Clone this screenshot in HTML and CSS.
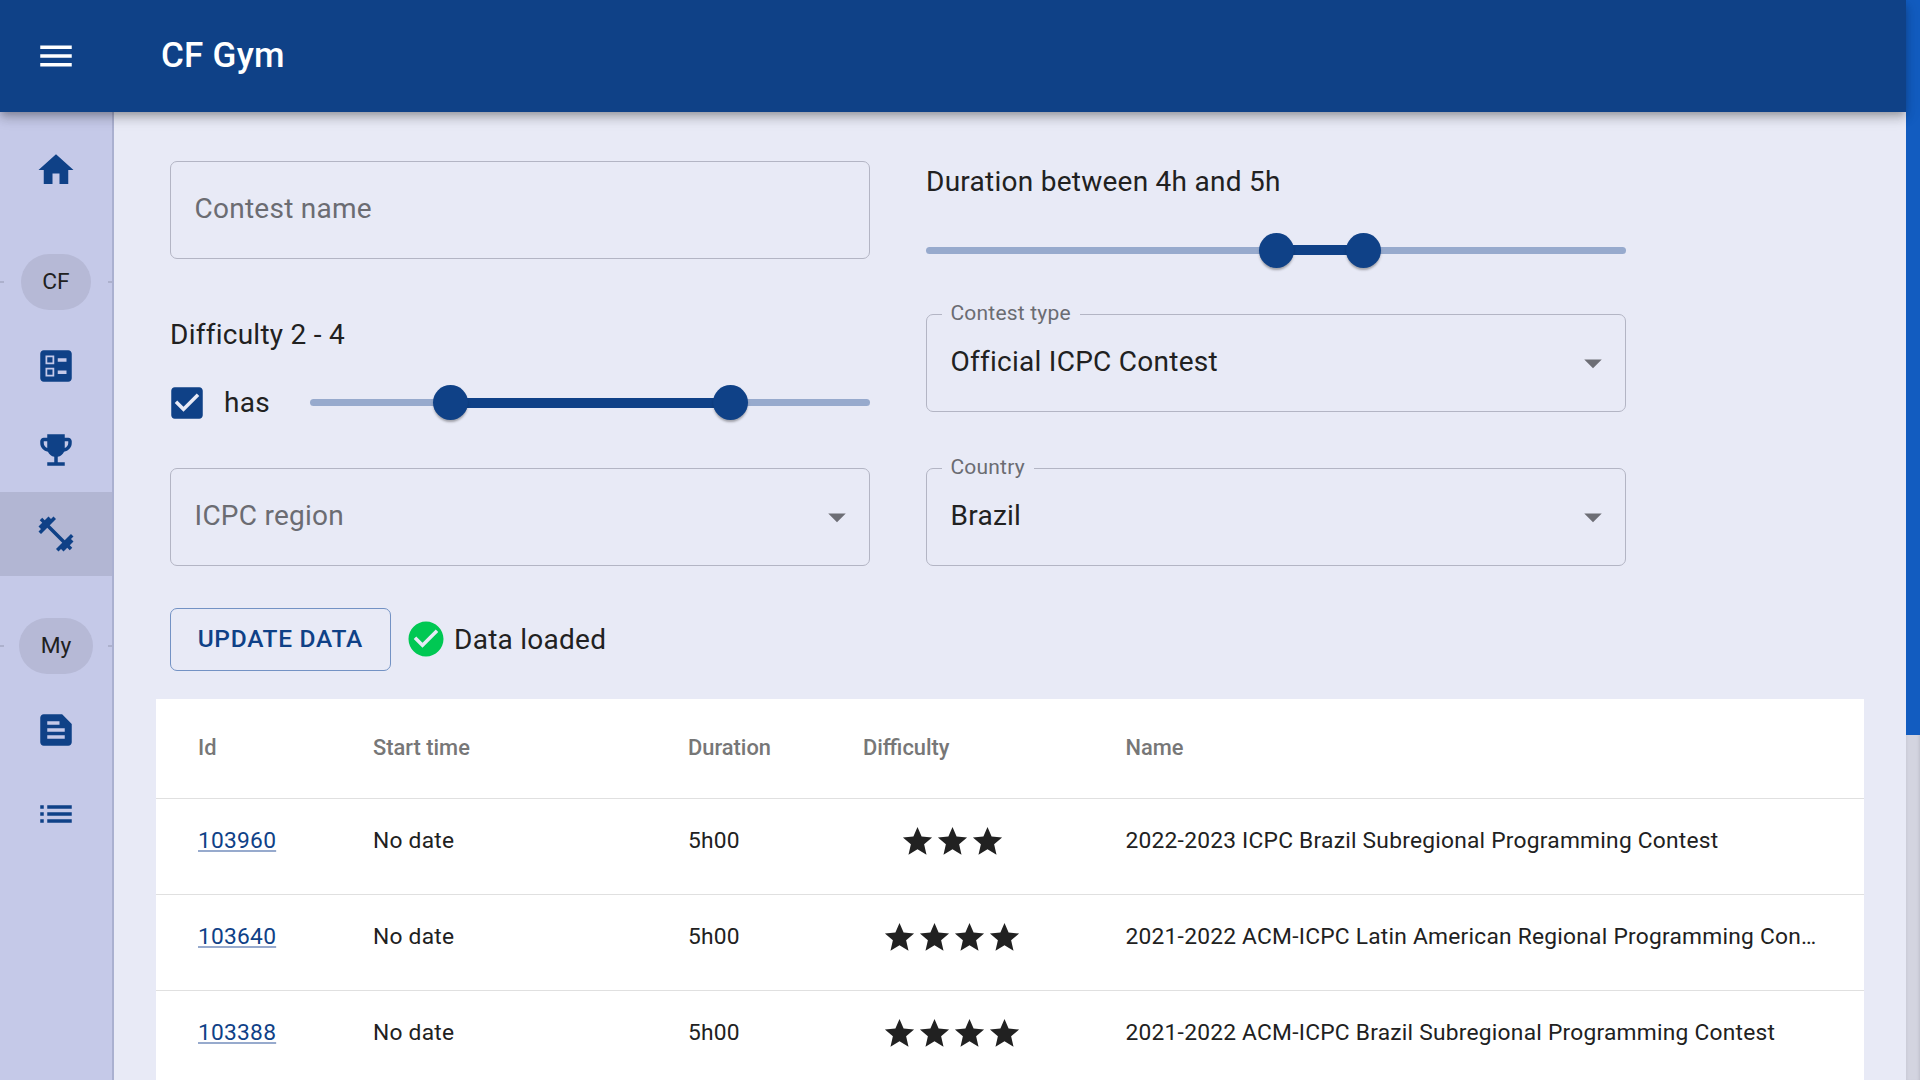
FILE: index.html
```html
<!DOCTYPE html>
<html lang="en">
<head>
<meta charset="utf-8">
<title>CF Gym</title>
<link rel="stylesheet" href="styles.css">
</head>
<body>
<div class="app">
  <div class="page">
    <header class="appbar">
      <svg class="icon menu-icon" viewBox="0 0 24 24"><path d="M3 18h18v-2H3v2zm0-5h18v-2H3v2zm0-7v2h18V6H3z"/></svg>
      <h1 class="app-title">CF Gym</h1>
    </header>
    <div class="body">
      <nav class="sidebar">
        <a class="nav-item"><svg class="icon" viewBox="0 0 24 24"><path d="M10 20v-6h4v6h5v-8h3L12 3 2 12h3v8z"/></svg></a>
        <div class="nav-divider"><span class="chip chip-cf">CF</span></div>
        <a class="nav-item"><svg class="icon" viewBox="0 0 24 24"><path fill-rule="evenodd" d="M13 9.5h5v-2h-5v2zm0 7h5v-2h-5v2zm6 4.5H5c-1.1 0-2-.9-2-2V5c0-1.1.9-2 2-2h14c1.1 0 2 .9 2 2v14c0 1.1-.9 2-2 2zM6 11h5V6H6v5zm1-4h3v3H7V7zM6 18h5v-5H6v5zm1-4h3v3H7v-3z"/></svg></a>
        <a class="nav-item"><svg class="icon" viewBox="0 0 24 24"><path d="M19 5h-2V3H7v2H5c-1.1 0-2 .9-2 2v1c0 2.55 1.92 4.63 4.39 4.94.63 1.5 1.98 2.63 3.61 2.96V19H7v2h10v-2h-4v-3.1c1.63-.33 2.98-1.46 3.61-2.96C19.08 12.63 21 10.55 21 8V7c0-1.1-.9-2-2-2zM5 8V7h2v3.82C5.84 10.4 5 9.3 5 8zm14 0c0 1.3-.84 2.4-2 2.82V7h2v1z"/></svg></a>
        <a class="nav-item selected"><svg class="icon" viewBox="0 0 24 24"><path d="M20.57 14.86 22 13.43 20.57 12 17 15.57 8.43 7 12 3.43 10.57 2 9.14 3.43 7.71 2 5.57 4.14 4.14 2.71 2.71 4.14l1.43 1.43L2 7.71l1.43 1.43L2 10.57 3.43 12 7 8.43 15.57 17 12 20.57 13.43 22l1.43-1.43L16.29 22l2.14-2.14 1.43 1.43 1.43-1.43-1.43-1.43L22 16.29z"/></svg></a>
        <div class="nav-divider"><span class="chip chip-my">My</span></div>
        <a class="nav-item"><svg class="icon" viewBox="0 0 24 24"><path d="M15.5 3H5c-1.1 0-2 .9-2 2v14c0 1.1.9 2 2 2h14c1.1 0 2-.9 2-2V8.5L15.5 3zM7 7h7v2H7V7zm10 10H7v-2h10v2zm0-4H7v-2h10v2z"/></svg></a>
        <a class="nav-item"><svg class="icon" viewBox="0 0 24 24"><path d="M3 13h2v-2H3v2zm0 4h2v-2H3v2zm0-8h2V7H3v2zm4 4h14v-2H7v2zm0 4h14v-2H7v2zM7 7v2h14V7H7z"/></svg></a>
      </nav>
      <main class="main">
        <section class="filters">
          <div class="filter-col">
            <div class="field"><span class="field-text placeholder">Contest name</span></div>
            <div class="filter-block">
              <div class="filter-label diff-label">Difficulty 2 - 4</div>
              <div class="has-row">
                <svg class="icon check-icon" viewBox="0 0 24 24"><path d="M19 3H5c-1.11 0-2 .9-2 2v14c0 1.1.89 2 2 2h14c1.11 0 2-.9 2-2V5c0-1.1-.89-2-2-2zm-9 14l-5-5 1.41-1.41L10 14.17l7.59-7.59L19 8l-9 9z"/></svg>
                <span class="has-text">has</span>
                <div class="slider has-slider">
                  <div class="rail"></div>
                  <div class="track" style="left:25%;width:50%"></div>
                  <div class="thumb" style="left:25%"></div>
                  <div class="thumb" style="left:75%"></div>
                </div>
              </div>
            </div>
            <div class="field">
              <span class="field-text placeholder">ICPC region</span>
              <svg class="caret" viewBox="0 0 24 24"><path d="M7 10l5 5 5-5z"/></svg>
            </div>
          </div>
          <div class="filter-col dur-col">
            <div class="filter-block dur-block">
              <div class="filter-label dur-label">Duration between 4h and 5h</div>
              <div class="slider dur-slider">
                <div class="rail"></div>
                <div class="track" style="left:50%;width:12.5%"></div>
                <div class="thumb" style="left:50%"></div>
                <div class="thumb" style="left:62.5%"></div>
              </div>
            </div>
            <div class="field">
              <span class="field-label">Contest type</span>
              <span class="field-text">Official ICPC Contest</span>
              <svg class="caret" viewBox="0 0 24 24"><path d="M7 10l5 5 5-5z"/></svg>
            </div>
            <div class="field">
              <span class="field-label">Country</span>
              <span class="field-text">Brazil</span>
              <svg class="caret" viewBox="0 0 24 24"><path d="M7 10l5 5 5-5z"/></svg>
            </div>
          </div>
        </section>
        <div class="actions">
          <button class="update-btn">UPDATE DATA</button>
          <svg class="icon ok-icon" viewBox="0 0 24 24"><path d="M12 2C6.48 2 2 6.48 2 12s4.48 10 10 10 10-4.48 10-10S17.52 2 12 2zm-2 15-5-5 1.41-1.41L10 14.17l7.59-7.59L19 8l-9 9z"/></svg>
          <span class="ok-text">Data loaded</span>
        </div>
        <table class="contests">
          <colgroup>
            <col class="c-id"><col class="c-start"><col class="c-dur"><col class="c-diff"><col class="c-name">
          </colgroup>
          <thead>
            <tr><th>Id</th><th>Start time</th><th>Duration</th><th>Difficulty</th><th>Name</th></tr>
          </thead>
          <tbody>
            <tr>
              <td><a class="link">103960</a></td><td>No date</td><td>5h00</td>
              <td><div class="stars"><svg viewBox="0 0 24 24"><use href="#star"/></svg><svg viewBox="0 0 24 24"><use href="#star"/></svg><svg viewBox="0 0 24 24"><use href="#star"/></svg></div></td>
              <td class="name-cell">2022-2023 ICPC Brazil Subregional Programming Contest</td>
            </tr>
            <tr>
              <td><a class="link">103640</a></td><td>No date</td><td>5h00</td>
              <td><div class="stars"><svg viewBox="0 0 24 24"><use href="#star"/></svg><svg viewBox="0 0 24 24"><use href="#star"/></svg><svg viewBox="0 0 24 24"><use href="#star"/></svg><svg viewBox="0 0 24 24"><use href="#star"/></svg></div></td>
              <td class="name-cell">2021-2022 ACM-ICPC Latin American Regional Programming Contest</td>
            </tr>
            <tr>
              <td><a class="link">103388</a></td><td>No date</td><td>5h00</td>
              <td><div class="stars"><svg viewBox="0 0 24 24"><use href="#star"/></svg><svg viewBox="0 0 24 24"><use href="#star"/></svg><svg viewBox="0 0 24 24"><use href="#star"/></svg><svg viewBox="0 0 24 24"><use href="#star"/></svg></div></td>
              <td class="name-cell">2021-2022 ACM-ICPC Brazil Subregional Programming Contest</td>
            </tr>
          </tbody>
        </table>
      </main>
    </div>
  </div>
  <div class="scrollbar"><div class="scroll-thumb"></div></div>
</div>
<svg class="defs" aria-hidden="true"><defs><path id="star" d="M12 17.27 18.18 21l-1.64-7.03L22 9.24l-7.19-.61L12 2 9.19 8.63 2 9.24l5.46 4.73L5.82 21z"/></defs></svg>
</body>
</html>
```
FILE: styles.css
```css
* { box-sizing: border-box; }
html, body { margin: 0; height: 100%; overflow: hidden; }
body { font-family: Roboto, "Liberation Sans", sans-serif; color: #212121; background: #e8eaf6; }
.defs { display: none; }

.app { display: flex; height: 1080px; overflow: hidden; }
.page { flex: 1; min-width: 0; display: flex; flex-direction: column; }

.scrollbar { width: 14px; background: #d3d4e0; box-shadow: inset 3px 0 3px -2px rgba(0,0,0,.05), inset -3px 0 3px -2px rgba(0,0,0,.1); }
.scroll-thumb { height: 735px; background: #125cc0; }

.icon { width: 42px; height: 42px; fill: #0f4187; flex: none; display: block; }

.appbar { height: 112px; flex: none; background: #0f4187; display: flex; align-items: center; padding-left: 35px; gap: 84px; position: relative; z-index: 2; box-shadow: 0 3.5px 7px -2px rgba(0,0,0,.2), 0 7px 9px 0 rgba(0,0,0,.14), 0 2px 18px 0 rgba(0,0,0,.12); }
.menu-icon { fill: #fff; }
.app-title { margin: 0 0 2px; font-size: 35px; font-weight: 500; line-height: 1; color: #fff; letter-spacing: .26px; }

.body { flex: 1; min-height: 0; display: flex; }

.sidebar { width: 114px; flex: none; background: #c5c9e8; border-right: 2px solid #aab0d0; padding-top: 16px; display: flex; flex-direction: column; }
.nav-item { height: 84px; flex: none; display: flex; align-items: center; justify-content: center; }
.nav-item.selected { background: #b2b6d3; }
.nav-divider { height: 112px; flex: none; padding-top: 42px; display: flex; justify-content: center; align-items: flex-start; position: relative; }
.nav-divider::before { content: ""; position: absolute; top: 69px; left: 0; right: 0; height: 2px; background: linear-gradient(to right, #adb1cd 4px, transparent 4px, transparent 108px, #adb1cd 108px); }
.chip { position: relative; height: 56px; padding-bottom: 1px; border-radius: 28px; background: #b6b9d6; display: flex; align-items: center; justify-content: center; font-size: 22.75px; color: #212121; }
.chip-cf { width: 70px; }
.chip-my { width: 74px; }

.main { flex: 1; min-width: 0; padding: 49px 42px 0; overflow: hidden; }

.filters { display: flex; gap: 56px; padding-left: 14px; }
.filter-col { width: 700px; display: flex; flex-direction: column; gap: 56px; }
.dur-col { gap: 56.5px; }

.field { height: 97.5px; border: 1.75px solid #b3b5c4; border-radius: 7px; display: flex; align-items: center; justify-content: space-between; padding: 0 12px 0 23.5px; position: relative; }
.field-text { font-size: 28px; line-height: 1.4; letter-spacing: .26px; margin-bottom: 1.5px; }
.placeholder { color: #6b6c72; }
.field-label { position: absolute; top: -14.5px; left: 14.5px; padding: 0 9px; background: #e8eaf6; font-size: 21px; line-height: 24px; color: #6b6c72; letter-spacing: .2px; }
.caret { width: 42px; height: 42px; fill: #6d6e75; flex: none; margin-right: -1px; }

.filter-block { height: 97.5px; position: relative; }
.dur-block { height: 96.5px; }
.filter-label { font-size: 28px; line-height: 34px; letter-spacing: .26px; }
.dur-label { margin-top: 4px; }
.diff-label { margin-top: 3px; }

.slider { position: relative; height: 35px; }
.rail { position: absolute; left: 0; right: 0; top: 14px; height: 7px; border-radius: 4px; background: #97aacd; }
.track { position: absolute; top: 12.25px; height: 10.5px; background: #0f4187; }
.thumb { position: absolute; top: 0; width: 35px; height: 35px; margin-left: -17.5px; border-radius: 50%; background: #0f4187; box-shadow: 0 3px 2px -1px rgba(0,0,0,.2), 0 2px 3px rgba(0,0,0,.14); }
.dur-slider { margin-top: 33.5px; }

.has-row { display: flex; align-items: center; height: 42px; margin-top: 30px; margin-left: -4px; }
.has-text { font-size: 28px; margin-left: 16px; width: 86px; letter-spacing: .26px; }
.has-slider { flex: 1; margin-top: .5px; }

.actions { display: flex; align-items: center; margin-top: 42.5px; margin-left: 14px; height: 62.5px; }
.update-btn { width: 220.5px; height: 62.5px; border: 1.75px solid #7392c4; border-radius: 7px; background: transparent; color: #0f4187; font-family: inherit; font-size: 24.5px; font-weight: 500; letter-spacing: .7px; padding: 0 0 1px; }
.ok-icon { margin-left: 14px; fill: #00c853; }
.ok-text { font-size: 28px; margin-left: 7.5px; letter-spacing: .26px; }

.contests { width: 1708px; margin-top: 28px; border-collapse: collapse; table-layout: fixed; background: #fff; font-size: 22.75px; letter-spacing: .24px; }
.c-id { width: 175px; }
.c-start { width: 315px; }
.c-dur { width: 175px; }
.c-diff { width: 262.5px; }
th { height: 100px; padding: 0 42px 1px; text-align: left; font-size: 21.875px; font-weight: 500; letter-spacing: 0; color: #777; border-bottom: 1.75px solid #e0e0e0; }
td { height: 96px; padding: 24.5px 42px 0; vertical-align: top; border-bottom: 1.75px solid #e0e0e0; line-height: 34px; }
.name-cell { white-space: nowrap; overflow: hidden; text-overflow: ellipsis; }
.link { color: #0f4187; text-decoration: underline; text-decoration-color: #97aacd; text-decoration-thickness: 2px; text-underline-offset: 2px; }
.stars { display: flex; justify-content: center; margin: 0 -42px; }
.stars svg { width: 35px; height: 35px; fill: #212121; }
```
